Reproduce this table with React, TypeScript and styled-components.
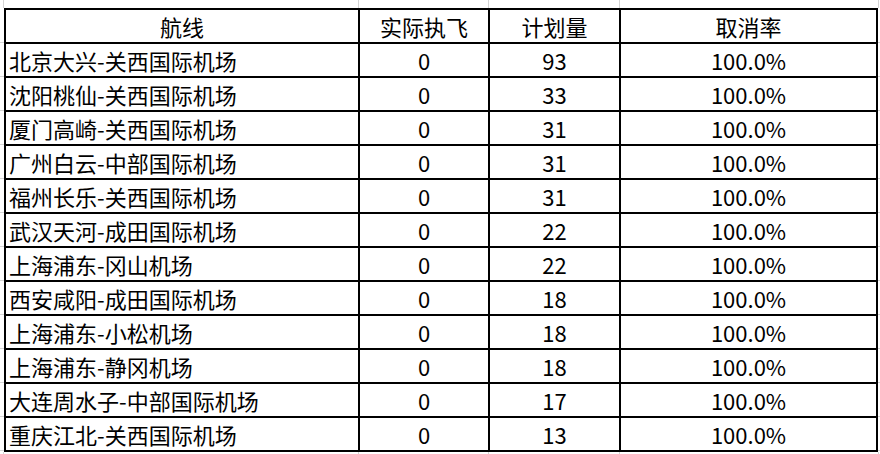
import React from "react";
import styled, {createGlobalStyle} from "styled-components";

type Row = { route: string, actual: number, planned: number, rate: string }

const rows: Row[] = [
    {route: "北京大兴-关西国际机场", actual: 0, planned: 93, rate: "100.0%"},
    {route: "沈阳桃仙-关西国际机场", actual: 0, planned: 33, rate: "100.0%"},
    {route: "厦门高崎-关西国际机场", actual: 0, planned: 31, rate: "100.0%"},
    {route: "广州白云-中部国际机场", actual: 0, planned: 31, rate: "100.0%"},
    {route: "福州长乐-关西国际机场", actual: 0, planned: 31, rate: "100.0%"},
    {route: "武汉天河-成田国际机场", actual: 0, planned: 22, rate: "100.0%"},
    {route: "上海浦东-冈山机场", actual: 0, planned: 22, rate: "100.0%"},
    {route: "西安咸阳-成田国际机场", actual: 0, planned: 18, rate: "100.0%"},
    {route: "上海浦东-小松机场", actual: 0, planned: 18, rate: "100.0%"},
    {route: "上海浦东-静冈机场", actual: 0, planned: 18, rate: "100.0%"},
    {route: "大连周水子-中部国际机场", actual: 0, planned: 17, rate: "100.0%"},
    {route: "重庆江北-关西国际机场", actual: 0, planned: 13, rate: "100.0%"},
];

const GRID = "#d4d4d4";

const GlobalStyle = createGlobalStyle`
  html, body {
    margin: 0;
    background: #fff;
  }
  body {
    font-family: "Noto Sans CJK SC", "Microsoft YaHei", sans-serif;
    color: #000;
  }
`;

const Sheet = styled.div`
    display: grid;
    grid-template-columns: 4px 874px 2px;
    grid-template-rows: 8px 444px 2px;
    width: 880px;
    height: 454px;
    overflow: hidden;
`;

// the gray spreadsheet gridlines that peek out above and below the table
const ColumnStrip = styled.div`
    grid-column: 1 / -1;
    display: grid;
    grid-template-columns: 4px 355px 130px 131px 259px 1px;
`;
const StripCell = styled.div<{ $last?: boolean }>`
    box-sizing: border-box;
    border-right: ${p => p.$last ? "none" : `1px solid ${GRID}`};
`;

const Gutter = styled.div`
    display: flex;
    flex-direction: column;
    padding-top: 1px;
    overflow: hidden;
`;
const Tick = styled.div`
    flex: 0 0 34px;
    box-sizing: border-box;
    border-bottom: 1px solid ${GRID};
`;

const Table = styled.div`
    display: grid;
    grid-template-columns: 352px 128px 129px 255px;
    grid-auto-rows: 32px;
    gap: 2px;
    padding: 2px;
    background: #000;
`;
const Cell = styled.div<{ $left?: boolean }>`
    background: #fff;
    display: flex;
    align-items: center;
    justify-content: ${p => p.$left ? "flex-start" : "center"};
    padding-left: ${p => p.$left ? "3px" : "0"};
    font-size: 22px;
    line-height: 1;
    white-space: nowrap;
`;

const Strip = () => (
    <ColumnStrip>
        {[0, 1, 2, 3, 4].map(i => <StripCell key={i}/>)}
        <StripCell $last/>
    </ColumnStrip>
);

const Ticks = () => (
    <Gutter>
        {Array.from({length: 13}).map((_, i) => <Tick key={i}/>)}
    </Gutter>
);

export default function App(): JSX.Element {
    return (<>
        <GlobalStyle/>
        <Sheet>
            <Strip/>
            <Ticks/>
            <Table>
                <Cell>航线</Cell>
                <Cell>实际执飞</Cell>
                <Cell>计划量</Cell>
                <Cell>取消率</Cell>
                {rows.map(r => (
                    <React.Fragment key={r.route}>
                        <Cell $left>{r.route}</Cell>
                        <Cell>{r.actual}</Cell>
                        <Cell>{r.planned}</Cell>
                        <Cell>{r.rate}</Cell>
                    </React.Fragment>
                ))}
            </Table>
            <Ticks/>
            <Strip/>
        </Sheet>
    </>);
}
